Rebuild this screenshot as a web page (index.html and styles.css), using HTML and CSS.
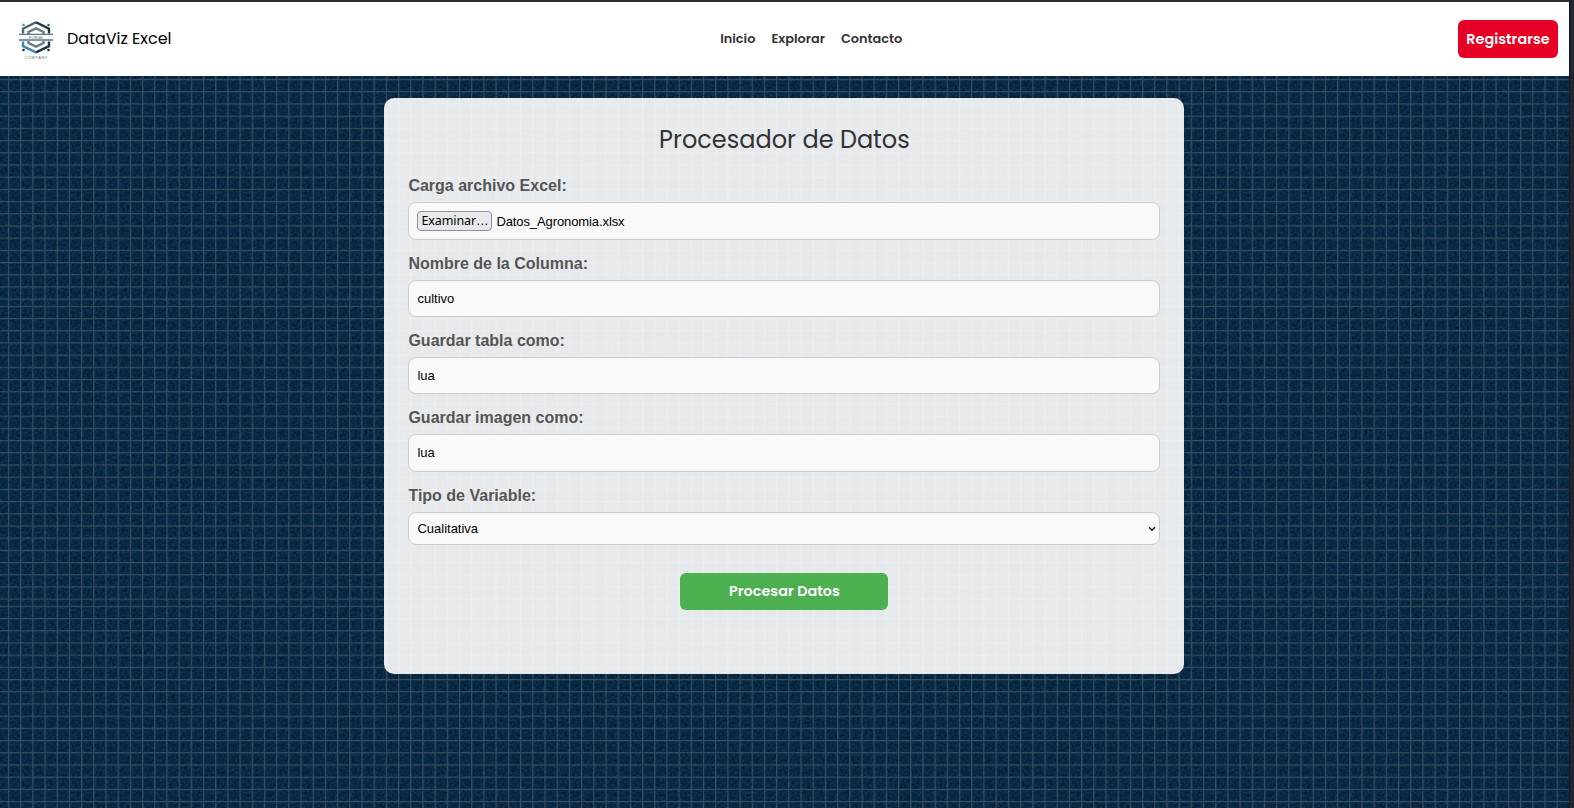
FILE: index.html
```html
<!DOCTYPE html>
<html lang="es">
<head>
<meta charset="utf-8">
<title>DataViz Excel</title>
<link rel="stylesheet" href="styles.css">
</head>
<body>
<div class="page">
  <header class="header">
    <div class="brand">
      <svg class="logo" width="36" height="40" viewBox="0 0 36 40">
        <g fill="none" stroke-width="2.4">
          <path d="M5 12.5V7.8L18 1.3" stroke="#4d6673"/>
          <path d="M18 1.3L31 7.8V12.5" stroke="#1c3341"/>
          <path d="M5 20.500V25.200L18 31.400" stroke="#3b87ae"/>
          <path d="M18 31.400L31 25.200V20.500" stroke="#1c3341"/>
          <path d="M10.500 13V10.900L18 7.300L25.500 10.900V13" stroke="#6c7a81"/>
          <path d="M10.500 20V22L18 25.600L25.500 22V20" stroke="#6c7a81"/>
        </g>
        <path d="M1 13.400H35M1 19H35" stroke="#557684" stroke-width="1.300"/>
        <circle cx="5.500" cy="4" r="1.300" fill="#3d94c1"/>
        <circle cx="30.500" cy="4" r="1.300" fill="#45606f"/>
        <circle cx="5.500" cy="29" r="1.300" fill="#1c3341"/>
        <circle cx="30.500" cy="29" r="1.300" fill="#1c3341"/>
        <text x="18" y="17.900" class="logo-name" textLength="14">FORGE</text>
        <text x="18" y="38" class="logo-sub" textLength="23">COMPANY</text>
      </svg>
      <span class="brand-name">DataViz Excel</span>
    </div>
    <nav class="nav">
      <a>Inicio</a>
      <a>Explorar</a>
      <a>Contacto</a>
    </nav>
    <button class="register"><span>Registrarse</span></button>
  </header>
  <main class="main">
    <form class="card">
      <h1 class="title">Procesador de Datos</h1>
      <label class="label">Carga archivo Excel:</label>
      <div class="field file"><span class="browse">Examinar<span class="dots">…</span></span><span class="filename">Datos_Agronomia.xlsx</span></div>
      <label class="label">Nombre de la Columna:</label>
      <div class="field">cultivo</div>
      <label class="label">Guardar tabla como:</label>
      <div class="field">lua</div>
      <label class="label">Guardar imagen como:</label>
      <div class="field image-name">lua</div>
      <label class="label">Tipo de Variable:</label>
      <div class="field select"><span>Cualitativa</span>
        <svg width="8" height="6" viewBox="0 0 8 6"><path d="M1 1.200L4 4.200L7 1.200" fill="none" stroke="#111" stroke-width="1.500"/></svg>
      </div>
      <button class="submit" type="button"><span>Procesar Datos</span></button>
    </form>
  </main>
</div>
</body>
</html>
```
FILE: styles.css
```css
* { box-sizing: border-box; }
html { height: 100%; background: #20252f; }
body {
  margin: 0;
  height: 808px;
  overflow: hidden;
  font-family: "Liberation Sans", Arial, sans-serif;
}
.page {
  width: 1570px;
  height: 808px;
  border-top: 2px solid #302f33;
  border-right: 1px solid #10141b;
  background-color: #0a2946;
  background-image: url("data:image/svg+xml,%3Csvg xmlns='http://www.w3.org/2000/svg' width='500' height='300'%3E%3Cdefs%3E%3Cfilter id='n' x='0' y='0' width='100%25' height='100%25' color-interpolation-filters='sRGB'%3E%3CfeTurbulence type='fractalNoise' baseFrequency='.4' numOctaves='3' stitchTiles='stitch'/%3E%3CfeColorMatrix values='.04 0 0 0 .015 .16 0 0 0 .077 .25 0 0 0 .135 0 0 0 0 1'/%3E%3C/filter%3E%3Cpattern id='g' x='7.900' y='3.800' width='12.190' height='12.200' patternUnits='userSpaceOnUse'%3E%3Cpath d='M0 .6H12.200M.6 0V12.200' stroke='%23566773' stroke-opacity='.6' stroke-width='1.200'/%3E%3C/pattern%3E%3C/defs%3E%3Crect width='500' height='300' filter='url(%23n)'/%3E%3Crect width='500' height='300' fill='url(%23g)'/%3E%3C/svg%3E");
}
.header {
  display: flex;
  justify-content: space-between;
  align-items: center;
  height: 74px;
  padding: 0 11px 0 18px;
  background: #fff;
  font-family: Poppins, Inter, sans-serif;
}
.brand { display: flex; align-items: center; gap: 13px; }
.logo { margin-top: 4px; }
.brand-name { font-size: 16px; line-height: 24px; margin-bottom: 1px; color: #000; }
.logo-name, .logo-sub { font-family: "Liberation Sans", sans-serif; text-anchor: middle; fill: #52616a; }
.logo-name { font-size: 4px; }
.logo-sub { font-size: 3.600px; }
.nav { display: flex; gap: 16px; margin-right: 7px; font-size: 12.900px; font-weight: 600; color: #333; }
.register {
  width: 100px;
  height: 38px;
  padding: 0;
  border: 0;
  border-radius: 6px;
  background: #e60023;
  color: #fff;
  font: 600 14.400px Poppins, Inter, sans-serif;
}
.main { display: flex; justify-content: center; padding: 22px .200px 0 0; }
.card {
  display: flex;
  flex-direction: column;
  width: 800px;
  height: 576px;
  padding: 24px;
  border-radius: 10px;
  background: rgba(255, 255, 255, .9);
}
.title {
  margin: 0 0 15.700px;
  height: 35px;
  text-align: center;
  font: 400 24px/35px Poppins, Inter, sans-serif;
  color: #333;
}
.label { height: 29.150px; line-height: 26.800px; font-size: 16px; font-weight: bold; color: #555; }
.field {
  display: flex;
  align-items: center;
  height: 37px;
  margin-bottom: 11px;
  padding: 0 8px;
  border: 1px solid #ccc;
  border-radius: 8px;
  background: #f9f9f9;
  font-size: 13px;
  color: #000;
}
.file { height: 38px; gap: 4px; }
.filename { padding-top: 1px; letter-spacing: -.100px; }
.image-name { height: 38px; padding-bottom: 1px; }
.browse {
  width: 75px;
  height: 20px;
  border: 1px solid #8f8f9d;
  border-radius: 4px;
  background: #e9e9ed;
  font: 12.500px/18px "Noto Sans", sans-serif;
  letter-spacing: -.100px;
  white-space: nowrap;
  text-align: center;
}
.dots { font-family: "Liberation Sans", sans-serif; }
.select { height: 33px; justify-content: space-between; padding-right: 3px; margin-bottom: 28px; }
.submit {
  align-self: center;
  width: 208px;
  height: 37px;
  border: 0;
  border-radius: 6px;
  background: #4caf50;
  color: #fff;
  font: 600 14.400px Poppins, Inter, sans-serif;
}
```
